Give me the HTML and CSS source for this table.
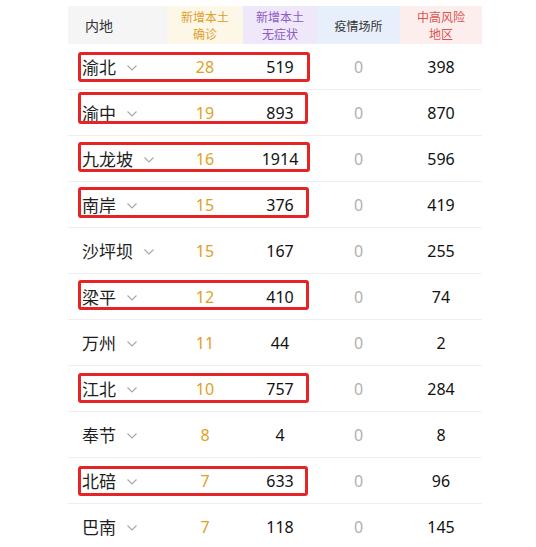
FILE: index.html
```html
<!DOCTYPE html>
<html lang="zh">
<head>
<meta charset="utf-8">
<link rel="stylesheet" href="styles.css">
</head>
<body>
<div class="board">
  <div class="row head">
    <div class="hc c-area">内地</div>
    <div class="hc c-conf">新增本土<br>确诊</div>
    <div class="hc c-asym">新增本土<br>无症状</div>
    <div class="hc c-place">疫情场所</div>
    <div class="hc c-risk">中高风险<br>地区</div>
  </div>

  <div class="row"><div class="area">渝北<svg class="chev" viewBox="0 0 10 6"><path d="M0.5 0.5 L5 5 L9.5 0.5"/></svg></div><div class="n conf">28</div><div class="n">519</div><div class="n zero">0</div><div class="n">398</div></div>
  <div class="row"><div class="area">渝中<svg class="chev" viewBox="0 0 10 6"><path d="M0.5 0.5 L5 5 L9.5 0.5"/></svg></div><div class="n conf">19</div><div class="n">893</div><div class="n zero">0</div><div class="n">870</div></div>
  <div class="row"><div class="area">九龙坡<svg class="chev" viewBox="0 0 10 6"><path d="M0.5 0.5 L5 5 L9.5 0.5"/></svg></div><div class="n conf">16</div><div class="n">1914</div><div class="n zero">0</div><div class="n">596</div></div>
  <div class="row"><div class="area">南岸<svg class="chev" viewBox="0 0 10 6"><path d="M0.5 0.5 L5 5 L9.5 0.5"/></svg></div><div class="n conf">15</div><div class="n">376</div><div class="n zero">0</div><div class="n">419</div></div>
  <div class="row"><div class="area">沙坪坝<svg class="chev" viewBox="0 0 10 6"><path d="M0.5 0.5 L5 5 L9.5 0.5"/></svg></div><div class="n conf">15</div><div class="n">167</div><div class="n zero">0</div><div class="n">255</div></div>
  <div class="row"><div class="area">梁平<svg class="chev" viewBox="0 0 10 6"><path d="M0.5 0.5 L5 5 L9.5 0.5"/></svg></div><div class="n conf">12</div><div class="n">410</div><div class="n zero">0</div><div class="n">74</div></div>
  <div class="row"><div class="area">万州<svg class="chev" viewBox="0 0 10 6"><path d="M0.5 0.5 L5 5 L9.5 0.5"/></svg></div><div class="n conf">11</div><div class="n">44</div><div class="n zero">0</div><div class="n">2</div></div>
  <div class="row"><div class="area">江北<svg class="chev" viewBox="0 0 10 6"><path d="M0.5 0.5 L5 5 L9.5 0.5"/></svg></div><div class="n conf">10</div><div class="n">757</div><div class="n zero">0</div><div class="n">284</div></div>
  <div class="row"><div class="area">奉节<svg class="chev" viewBox="0 0 10 6"><path d="M0.5 0.5 L5 5 L9.5 0.5"/></svg></div><div class="n conf">8</div><div class="n">4</div><div class="n zero">0</div><div class="n">8</div></div>
  <div class="row"><div class="area">北碚<svg class="chev" viewBox="0 0 10 6"><path d="M0.5 0.5 L5 5 L9.5 0.5"/></svg></div><div class="n conf">7</div><div class="n">633</div><div class="n zero">0</div><div class="n">96</div></div>
  <div class="row"><div class="area">巴南<svg class="chev" viewBox="0 0 10 6"><path d="M0.5 0.5 L5 5 L9.5 0.5"/></svg></div><div class="n conf">7</div><div class="n">118</div><div class="n zero">0</div><div class="n">145</div></div>

  <div class="mark" style="left:10px;top:46px;width:232px;height:30px"></div>
  <div class="mark" style="left:10px;top:86px;width:230px;height:32px"></div>
  <div class="mark" style="left:10px;top:136px;width:232px;height:30px"></div>
  <div class="mark" style="left:10px;top:181px;width:231px;height:31px"></div>
  <div class="mark" style="left:10px;top:274px;width:231px;height:30px"></div>
  <div class="mark" style="left:10px;top:367px;width:231px;height:30px"></div>
  <div class="mark" style="left:10px;top:460px;width:230px;height:30px"></div>
</div>
</body>
</html>
```

FILE: styles.css
```css
html, body {
  margin: 0;
  padding: 0;
  background: #ffffff;
}
body {
  font-family: "Noto Sans", "Noto Sans CJK SC", sans-serif;
  color: #222;
  overflow: hidden;
}
.board {
  position: relative;
  width: 414px;
  margin: 6px 0 0 68px;
}
.row {
  display: grid;
  grid-template-columns: 99px 76px 74px 83px 82px;
  height: 46px;
  border-bottom: 1px solid #efefef;
  box-sizing: border-box;
  align-items: center;
}
.row.head {
  height: 38px;
  border-bottom: none;
  align-items: stretch;
}
.hc {
  display: flex;
  align-items: center;
  justify-content: center;
  text-align: center;
  font-family: "Noto Sans CJK SC", sans-serif;
  font-size: 12px;
  line-height: 17px;
}
.c-area {
  background: #f5f5f6;
  color: #333;
  justify-content: flex-start;
  padding-left: 17px;
  font-size: 14px;
}
.c-conf { background: #fdf7e8; color: #dea02c; }
.c-asym { background: #efe7fa; color: #8c5cc4; }
.c-place { background: #e8effc; color: #333; }
.c-risk { background: #fdeeee; color: #d9534f; }
.area {
  display: flex;
  align-items: center;
  padding-left: 14px;
  font-family: "Noto Sans CJK SC", sans-serif;
  font-size: 17px;
  color: #1e1e1e;
}
.chev {
  width: 10px;
  height: 6px;
  margin-left: 11px;
  margin-top: 2px;
  fill: none;
  stroke: #a8a8a8;
  stroke-width: 1.2;
}
.n {
  text-align: center;
  font-size: 16px;
  color: #111;
}
.n.conf { color: #e0a11f; }
.n.zero { color: #b0b0b0; }
.mark {
  position: absolute;
  border: 3px solid #e52525;
  border-radius: 3px;
  box-sizing: border-box;
}
```
